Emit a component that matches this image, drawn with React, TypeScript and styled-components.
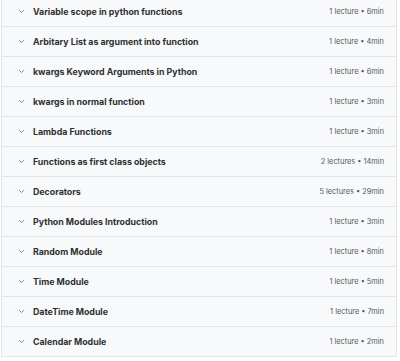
import React from "react";
import styled, { createGlobalStyle } from "styled-components";

const Global = createGlobalStyle`
  html, body { margin: 0; padding: 0; background: #ffffff; }
  body { font-family: Inter, "Noto Sans", sans-serif; -webkit-font-smoothing: antialiased; }
`;

const List = styled.div`
  margin-top: -3px;
  width: 396px;
  margin-left: 1px;
  border-left: 1px solid #e3e6e9;
  border-right: 1px solid #e3e6e9;
  box-sizing: border-box;
  display: flex;
  flex-direction: column;
`;

const Row = styled.div`
  height: 30px;
  box-sizing: border-box;
  background: #f7f9fa;
  border-bottom: 1px solid #e3e6e9;
  display: flex;
  align-items: center;
  padding: 0 12px 0 16px;
`;

const Chevron = styled.svg`
  width: 7px;
  height: 7px;
  flex: none;
  color: #6a6f73;
  margin-right: 8px;
`;

const Title = styled.span`
  flex: 1;
  font-size: 8.8px;
  font-weight: 700;
  color: #2d2f31;
  white-space: nowrap;
`;

const Meta = styled.span`
  font-size: 7.4px;
  color: #55595d;
  white-space: nowrap;
`;

const rows: [string, string][] = [
  ["Variable scope in python functions", "1 lecture • 6min"],
  ["Arbitary List as argument into function", "1 lecture • 4min"],
  ["kwargs Keyword Arguments in Python", "1 lecture • 6min"],
  ["kwargs in normal function", "1 lecture • 3min"],
  ["Lambda Functions", "1 lecture • 3min"],
  ["Functions as first class objects", "2 lectures • 14min"],
  ["Decorators", "5 lectures • 29min"],
  ["Python Modules Introduction", "1 lecture • 3min"],
  ["Random Module", "1 lecture • 8min"],
  ["Time Module", "1 lecture • 5min"],
  ["DateTime Module", "1 lecture • 7min"],
  ["Calendar Module", "1 lecture • 2min"],
];

export default function App() {
  return (
    <>
      <Global />
      <List>
        {rows.map(([t, m]) => (
          <Row key={t}>
            <Chevron viewBox="0 0 10 10">
              <path d="M2 3.5 L5 6.5 L8 3.5" fill="none" stroke="currentColor" strokeWidth="1.2" strokeLinecap="round" strokeLinejoin="round" />
            </Chevron>
            <Title>{t}</Title>
            <Meta>{m}</Meta>
          </Row>
        ))}
      </List>
    </>
  );
}
